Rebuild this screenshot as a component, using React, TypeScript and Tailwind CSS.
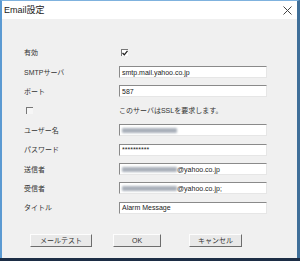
const font = { fontFamily: '"Liberation Sans", "Noto Sans CJK JP", sans-serif' }

function Field({ children }: { children?: React.ReactNode }) {
  return (
    <div className="flex h-[12px] w-[148px] items-center overflow-hidden whitespace-nowrap border-t border-l border-b border-r border-t-[#8a8a8a] border-l-[#8a8a8a] border-b-[#e6e6e6] border-r-[#e6e6e6] bg-white pl-[2px] text-[7px] leading-none text-[#222]">
      {children}
    </div>
  )
}

function Blur({ w }: { w: number }) {
  return (
    <span
      className="inline-block h-[5px] rounded-[1px] bg-[#a9b0ba] blur-[1px]"
      style={{ width: w }}
    />
  )
}

function Row({ label, children }: { label?: React.ReactNode; children: React.ReactNode }) {
  return (
    <div className="flex h-[19.4px] shrink-0 items-center">
      <div className="w-[117px] shrink-0 pl-[22px] text-[7px] leading-none text-[#333]">{label}</div>
      {children}
    </div>
  )
}

function Button({ label, w }: { label: string; w: number }) {
  return (
    <button
      className="flex h-[13px] items-center justify-center border border-t-[#fdfdfd] border-l-[#fdfdfd] border-b-[#6d6d6d] border-r-[#6d6d6d] bg-[#e9e9e9] text-[7px] leading-none text-[#333]"
      style={{ width: w }}
    >
      {label}
    </button>
  )
}

export default function App() {
  return (
    <div className="flex h-[261px] w-[300px] flex-col bg-[#1c2d45]" style={font}>
      <div className="flex h-[258px] shrink-0 flex-col border-t border-l-2 border-r-[3px] border-t-[#7fb2de] border-l-[#5b9ad2] border-r-[#3f6f99] bg-[#f0f0f0]">
        <div className="flex h-[18px] shrink-0 items-center justify-between bg-white pl-[2px] pr-[5px]">
          <span className="text-[9px] leading-none text-[#222]">Email設定</span>
          <svg width="9" height="9" viewBox="0 0 9 9">
            <path d="M0.5 0.5 L8.5 8.5 M8.5 0.5 L0.5 8.5" stroke="#444" strokeWidth="1" />
          </svg>
        </div>
        <div className="flex shrink-0 flex-col pt-[24px]">
          <Row label="有効">
            <div className="ml-[2px] flex h-[7px] w-[7px] items-center justify-center border-t border-l border-[#777] bg-white">
              <svg width="6" height="6" viewBox="0 0 6 6">
                <path d="M0.5 3 L2.3 4.8 L5.5 0.8" stroke="#222" strokeWidth="1.3" fill="none" />
              </svg>
            </div>
          </Row>
          <Row label="SMTPサーバ">
            <Field>smtp.mail.yahoo.co.jp</Field>
          </Row>
          <Row label="ポート">
            <Field>587</Field>
          </Row>
          <Row
            label={<div className="ml-[2px] h-[7px] w-[7px] border-t border-l border-[#777] bg-[#f6f6f6]" />}
          >
            <span className="text-[7px] leading-none text-[#333]">このサーバはSSLを要求します。</span>
          </Row>
          <Row label="ユーザー名">
            <Field>
              <Blur w={55} />
            </Field>
          </Row>
          <Row label="パスワード">
            <Field>**********</Field>
          </Row>
          <Row label="送信者">
            <Field>
              <Blur w={55} />
              <span>@yahoo.co.jp</span>
            </Field>
          </Row>
          <Row label="受信者">
            <Field>
              <Blur w={55} />
              <span>@yahoo.co.jp;</span>
            </Field>
          </Row>
          <Row label="タイトル">
            <Field>Alarm Message</Field>
          </Row>
        </div>
        <div className="mt-[16px] flex shrink-0 items-center pl-[28px]">
          <Button label="メールテスト" w={62} />
          <div className="w-[21px]" />
          <Button label="OK" w={48} />
          <div className="w-[28px]" />
          <Button label="キャンセル" w={53} />
        </div>
      </div>
    </div>
  )
}
